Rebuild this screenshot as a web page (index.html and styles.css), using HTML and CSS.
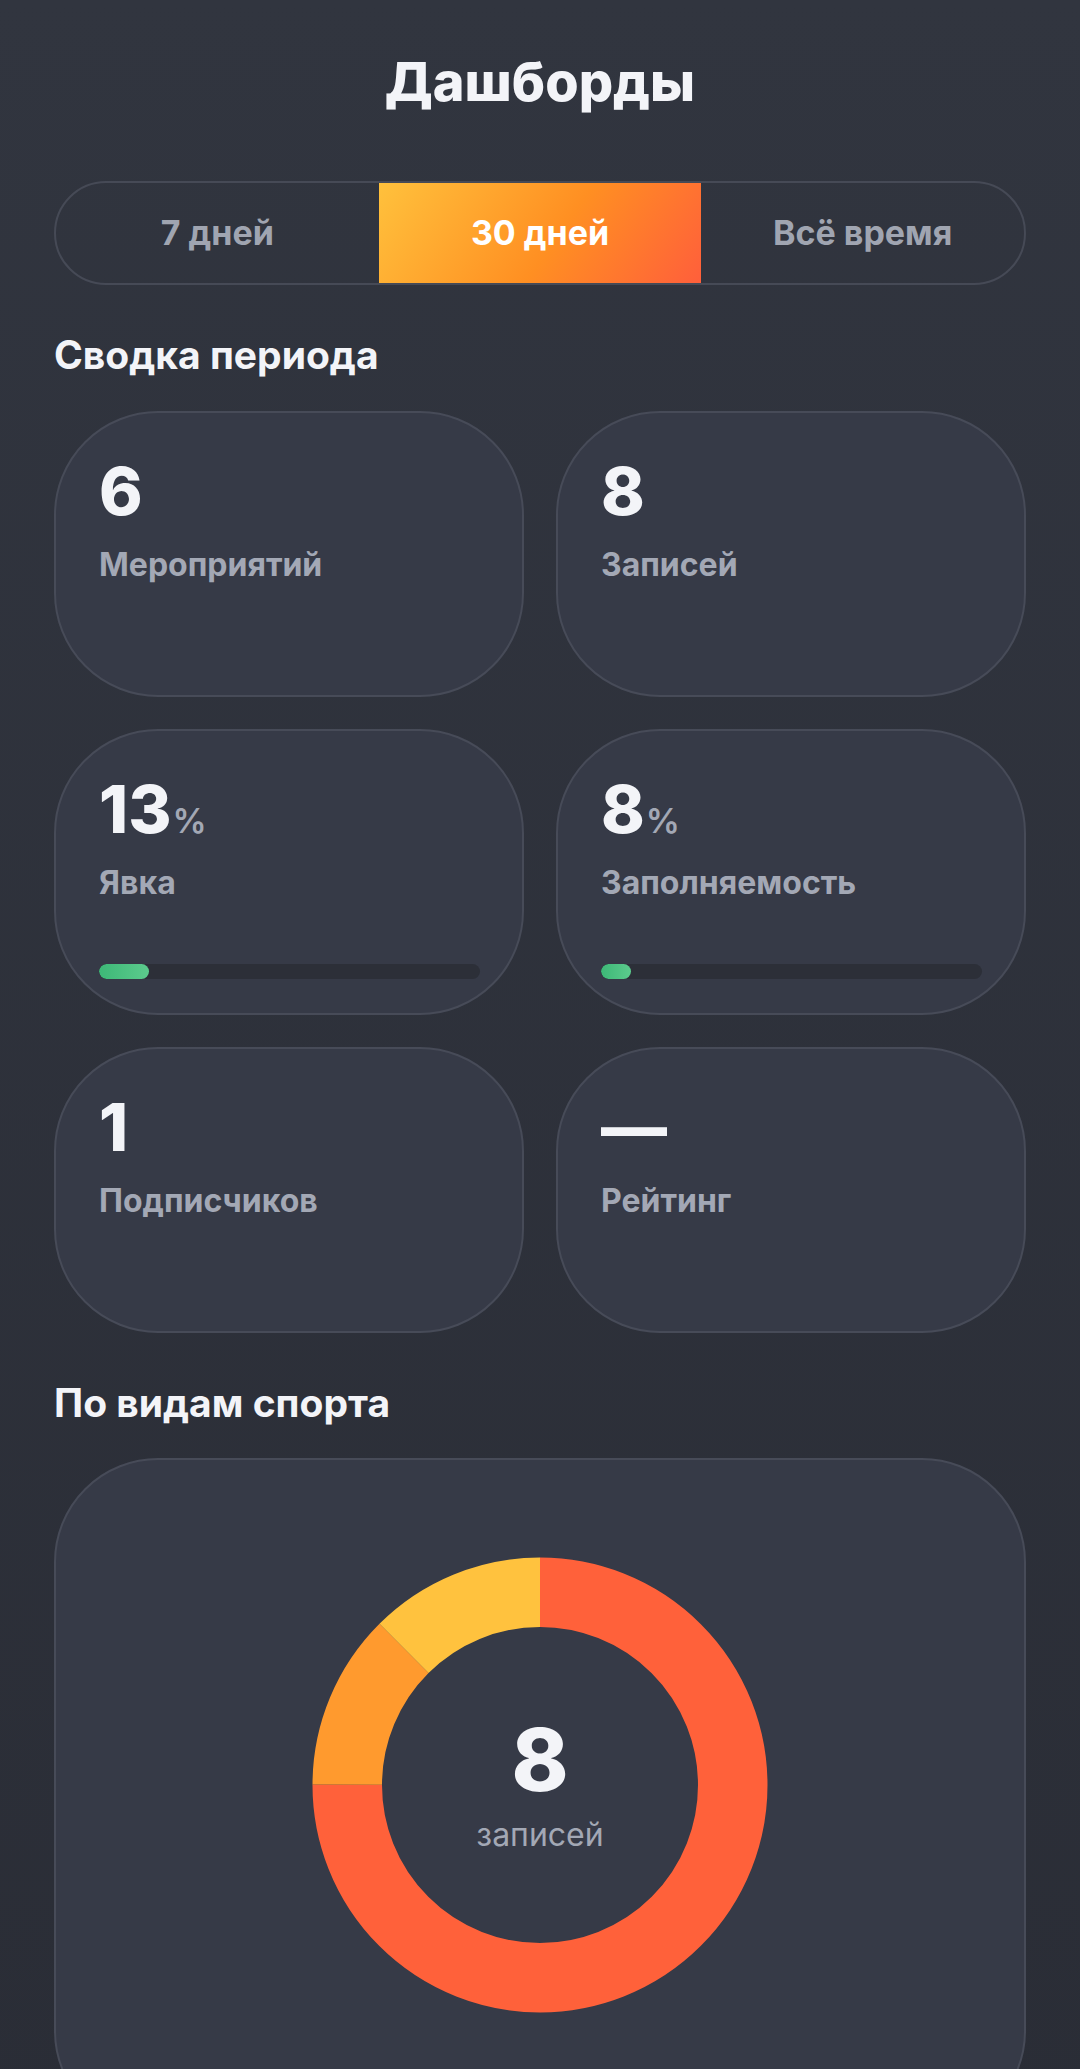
FILE: index.html
```html
<!DOCTYPE html>
<html lang="ru">
<head>
    <meta charset="UTF-8">
    <meta name="viewport" content="width=device-width, initial-scale=1.0">
    <title>Дашборды</title>
    <link rel="stylesheet" href="styles.css">
</head>
<body>
    <div class="page">
        <h1 class="title">Дашборды</h1>

        <!-- Переключатель периода -->
        <div class="period-switch">
            <button class="period-btn">7 дней</button>
            <button class="period-btn active">30 дней</button>
            <button class="period-btn">Всё время</button>
        </div>

        <!-- Сводка -->
        <h2 class="section-title">Сводка периода</h2>
        <div class="stats">
            <div class="stat-card">
                <div class="stat-value">6</div>
                <div class="stat-label">Мероприятий</div>
            </div>
            <div class="stat-card">
                <div class="stat-value">8</div>
                <div class="stat-label">Записей</div>
            </div>
            <div class="stat-card">
                <div class="stat-value">13<span class="stat-unit">%</span></div>
                <div class="stat-label">Явка</div>
                <div class="progress"><div class="progress-fill" style="width: 13%"></div></div>
            </div>
            <div class="stat-card">
                <div class="stat-value">8<span class="stat-unit">%</span></div>
                <div class="stat-label">Заполняемость</div>
                <div class="progress"><div class="progress-fill" style="width: 8%"></div></div>
            </div>
            <div class="stat-card">
                <div class="stat-value">1</div>
                <div class="stat-label">Подписчиков</div>
            </div>
            <div class="stat-card">
                <div class="stat-value">—</div>
                <div class="stat-label">Рейтинг</div>
            </div>
        </div>

        <!-- По видам спорта -->
        <h2 class="section-title">По видам спорта</h2>
        <div class="chart-card">
            <div class="donut">
                <svg class="donut-svg" width="456" height="456" viewBox="0 0 456 456">
                    <g transform="rotate(-90 228 228)">
                        <circle cx="228" cy="228" r="192.75" fill="none" stroke="#ff613a" stroke-width="69.5"
                                stroke-dasharray="908.3 1211.1" stroke-dashoffset="0"></circle>
                        <circle cx="228" cy="228" r="192.75" fill="none" stroke="#ff9a2e" stroke-width="69.5"
                                stroke-dasharray="151.4 1211.1" stroke-dashoffset="-908.3"></circle>
                        <circle cx="228" cy="228" r="192.75" fill="none" stroke="#ffc23e" stroke-width="69.5"
                                stroke-dasharray="151.4 1211.1" stroke-dashoffset="-1059.7"></circle>
                    </g>
                </svg>
                <div class="donut-center">
                    <div class="donut-value">8</div>
                    <div class="donut-label">записей</div>
                </div>
            </div>
        </div>
    </div>
</body>
</html>
```

FILE: styles.css
```css
body {
    font-family: Inter, "Noto Sans", sans-serif;
    margin: 0;
    padding: 0;
    background: linear-gradient(#31353f, #2a2d36);
    background-color: #2d3039;
    color: #f3f4f8;
    min-height: 2069px;
}
.page {
    padding: 50px 54px 0;
}
.title {
    margin: 0;
    font-size: 54px;
    font-weight: 800;
    line-height: 1.2;
    text-align: center;
    color: #f3f4f8;
}
.period-switch {
    display: flex;
    height: 104px;
    margin-top: 66px;
    border: 2px solid #464a56;
    border-radius: 52px;
    box-sizing: border-box;
}
.period-btn {
    flex: 1;
    border: none;
    background: none;
    padding: 0;
    font-family: inherit;
    font-size: 34px;
    font-weight: 700;
    color: #a0a5b1;
}
.period-btn.active {
    color: #ffffff;
    background: linear-gradient(125deg, #ffc13c 0%, #ff8f22 55%, #ff5f3b 100%);
}
.section-title {
    margin: 47px 0 32px;
    font-size: 39px;
    font-weight: 700;
    line-height: 1.2;
    color: #f3f4f8;
}
.stats {
    display: grid;
    grid-template-columns: 1fr 1fr;
    gap: 32px 32px;
}
.stat-card {
    display: flex;
    flex-direction: column;
    min-height: 286px;
    box-sizing: border-box;
    padding: 42px 42px 34px 43px;
    background-color: #363a47;
    border: 2px solid #474b58;
    border-radius: 104px;
}
.stat-value {
    font-size: 66px;
    font-weight: 800;
    line-height: 1.1;
    color: #f3f4f8;
}
.stat-unit {
    margin-left: 1px;
    font-size: 34px;
    font-weight: 600;
    color: #a3a8b5;
}
.stat-label {
    margin-top: 19px;
    font-size: 32px;
    font-weight: 700;
    line-height: 1.2;
    color: #a3a8b5;
}
.progress {
    margin-top: auto;
    height: 15px;
    border-radius: 8px;
    background-color: #2c2f38;
    overflow: hidden;
}
.progress-fill {
    height: 100%;
    border-radius: 8px;
    background: linear-gradient(90deg, #3db877, #5ccb8d);
}
.chart-card {
    display: flex;
    justify-content: center;
    padding: 97px 0 120px;
    background-color: #363a47;
    border: 2px solid #474b58;
    border-radius: 104px;
}
.donut {
    display: grid;
    width: 456px;
    height: 456px;
}
.donut-svg,
.donut-center {
    grid-area: 1 / 1;
}
.donut-center {
    display: flex;
    flex-direction: column;
    align-items: center;
    justify-content: center;
    gap: 13px;
}
.donut-value {
    font-size: 86px;
    font-weight: 800;
    line-height: 1;
    color: #f3f4f8;
}
.donut-label {
    font-size: 32px;
    font-weight: 400;
    line-height: 1.2;
    color: #a3a8b5;
}
```
